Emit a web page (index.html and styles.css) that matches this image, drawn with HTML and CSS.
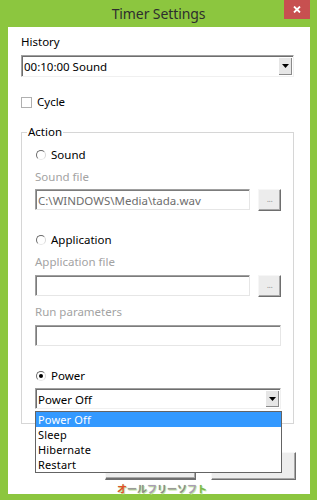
FILE: index.html
```html
<!DOCTYPE html>
<html>
<head>
<meta charset="utf-8">
<link rel="stylesheet" href="styles.css">
</head>
<body>
<div class="window">
  <div class="titlebar">
    <span></span>
    <div class="title">Timer Settings</div>
    <div class="close">
      <svg width="8" height="7" viewBox="0 0 8 7"><path d="M1 0.5 L7 6.5 M7 0.5 L1 6.5" stroke="#fff" stroke-width="1.8" fill="none"/></svg>
    </div>
  </div>
  <div class="client">
    <div class="row">History</div>
    <div class="combo history">
      <span class="combo-text">00:10:00 Sound</span>
      <span class="combo-btn"><svg width="7" height="4" viewBox="0 0 7 4"><path d="M0 0 H7 L3.5 4 Z" fill="#000"/></svg></span>
    </div>
    <div class="row cycle"><span class="checkbox"></span>Cycle</div>

    <div class="group">
      <div class="legend">Action</div>

      <div class="row radio-row first"><span class="radio"></span>Sound</div>
      <div class="row muted gap6">Sound file</div>
      <div class="file-row gap4">
        <div class="input disabled">C:\WINDOWS\Media\tada.wav</div>
        <div class="browse">...</div>
      </div>

      <div class="row radio-row gap21"><span class="radio"></span>Application</div>
      <div class="row muted gap6">Application file</div>
      <div class="file-row gap5">
        <div class="input"></div>
        <div class="browse">...</div>
      </div>
      <div class="row muted gap7">Run parameters</div>
      <div class="input wide gap5"></div>

      <div class="row radio-row gap22"><span class="radio checked"></span>Power</div>
      <div class="combo power gap4">
        <span class="combo-text">Power Off</span>
        <span class="combo-btn"><svg width="7" height="4" viewBox="0 0 7 4"><path d="M0 0 H7 L3.5 4 Z" fill="#000"/></svg></span>
        <ul class="dropdown">
          <li class="selected">Power Off</li>
          <li>Sleep</li>
          <li>Hibernate</li>
          <li>Restart</li>
        </ul>
      </div>
    </div>

    <div class="buttons">
      <div class="btn ok"></div>
      <div class="btn cancel"></div>
    </div>
    <div class="watermark"><span class="c1">オ</span><span class="c2">ー</span><span class="c3">ル</span><span class="c4">フ</span><span class="c3">リ</span><span class="c2">ー</span><span class="c3">ソ</span><span class="c4">フ</span><span class="c5">ト</span></div>
  </div>
</div>
</body>
</html>
```

FILE: styles.css
```css
html, body {
  margin: 0;
  padding: 0;
}
body {
  width: 317px;
  height: 500px;
  overflow: hidden;
  background: #8cc63f;
  font-family: "Noto Sans", "Liberation Sans", sans-serif;
  font-size: 11.5px;
  color: #000;
}
.window {
  display: flex;
  flex-direction: column;
  height: 500px;
}
.titlebar {
  height: 27px;
  display: grid;
  grid-template-columns: 1fr auto 1fr;
  align-items: start;
}
.title {
  font-size: 14px;
  letter-spacing: -0.1px;
  line-height: 27px;
  color: #2e2e2e;
  white-space: nowrap;
}
.close {
  justify-self: end;
  width: 26px;
  height: 19px;
  margin-right: 7px;
  background: #c75050;
  display: flex;
  align-items: center;
  justify-content: center;
}
.client {
  flex: 1;
  margin: 0 7px 8px 8px;
  background: #fff;
  padding: 7px 16px 0 13px;
  display: flex;
  flex-direction: column;
}
.row {
  height: 16px;
  line-height: 16px;
  display: flex;
  align-items: center;
  white-space: nowrap;
}
.muted { color: #a3a3a3; }
.gap4 { margin-top: 4px; }
.gap5 { margin-top: 5px; }
.gap6 { margin-top: 6px; }
.gap7 { margin-top: 7px; }
.gap21 { margin-top: 21px; }
.gap22 { margin-top: 22px; }

/* combo box */
.combo {
  position: relative;
  box-sizing: border-box;
  display: flex;
  border: 1px solid;
  border-color: #a0a0a0 #f0f0f0 #f0f0f0 #a0a0a0;
  box-shadow: inset 1px 1px 0 #6e6e6e;
  background: #fff;
}
.combo.history {
  margin-top: 5px;
  height: 22px;
}
.combo.power {
  height: 21px;
  width: 246px;
}
.combo-text {
  flex: 1;
  padding-left: 2px;
  padding-top: 1px;
  display: flex;
  align-items: center;
  white-space: nowrap;
}
.combo-btn {
  width: 13px;
  margin: 2px 1px 1px 0;
  box-sizing: border-box;
  background: #e6e6e6;
  border-right: 1px solid #8a8a8a;
  border-bottom: 1px solid #8a8a8a;
  display: flex;
  align-items: center;
  justify-content: center;
}

/* checkbox */
.cycle { margin-top: 17px; }
.checkbox {
  width: 11px;
  height: 11px;
  box-sizing: border-box;
  border: 1px solid #b0b0b0;
  margin-right: 5px;
  background: #fff;
}

/* group box */
.group {
  margin-top: 22px;
  border: 1px solid #d6d6d6;
  padding: 0 12px 14px 13px;
  display: flex;
  flex-direction: column;
}
.legend {
  align-self: flex-start;
  margin: -9px 0 0 -8px;
  padding: 0 1px;
  height: 16px;
  line-height: 16px;
  background: #fff;
}
.radio-row.first { margin-top: 7px; }
.radio {
  width: 10px;
  height: 10px;
  box-sizing: border-box;
  border-radius: 50%;
  border: 1px solid;
  border-color: #6a6a6a #d8d8d8 #e8e8e8 #6a6a6a;
  margin: 0 5px 0 1px;
  display: flex;
  align-items: center;
  justify-content: center;
}
.radio.checked::after {
  content: "";
  width: 4px;
  height: 4px;
  border-radius: 50%;
  background: #000;
}

/* text inputs */
.file-row {
  display: flex;
  align-items: flex-start;
}
.input {
  width: 217px;
  height: 21px;
  box-sizing: border-box;
  border: 1px solid;
  border-color: #a0a0a0 #e6e6e6 #e6e6e6 #a0a0a0;
  box-shadow: inset 1px 1px 0 #7c7c7c;
  padding: 1px 0 0 2px;
  display: flex;
  align-items: center;
  white-space: nowrap;
  color: #6d6d6d;
  background: #fff;
}
.input.wide { width: 246px; }
.browse {
  width: 23px;
  height: 22px;
  margin-left: 8px;
  box-sizing: border-box;
  background: #ececec;
  border: 1px solid;
  border-color: #f6f6f6 #6e6e6e #6e6e6e #f6f6f6;
  box-shadow: inset -1px -1px 0 #a8a8a8;
  color: #9a9a9a;
  font-size: 9px;
  line-height: 18px;
  text-align: center;
  letter-spacing: -0.5px;
}

/* dropdown list */
.dropdown {
  position: absolute;
  top: 22px;
  left: -1px;
  width: 247px;
  box-sizing: border-box;
  margin: 0;
  padding: 0;
  list-style: none;
  border: 1px solid #646464;
  background: #fff;
  z-index: 5;
}
.dropdown li {
  height: 15px;
  line-height: 15px;
  padding-left: 2px;
  font-size: 11px;
  letter-spacing: 0.15px;
  white-space: nowrap;
  overflow: hidden;
}
.dropdown li.selected {
  background: #3399ff;
  color: #fff;
}

/* bottom buttons */
.buttons {
  margin-top: 28px;
  display: flex;
  justify-content: flex-end;
  gap: 15px;
  margin-right: -2px;
}
.btn {
  height: 28px;
  box-sizing: border-box;
  background: #ededed;
  border: 1px solid;
  border-color: #f8f8f8 #6e6e6e #6e6e6e #f8f8f8;
  box-shadow: inset -1px -1px 0 #a8a8a8;
}
.btn.ok { width: 91px; border-bottom-width: 2px; }
.btn.cancel { width: 85px; }

/* site watermark */
.watermark {
  margin-top: 3px;
  height: 11px;
  padding-left: 96px;
  font-family: "Noto Sans CJK JP", sans-serif;
  font-weight: bold;
  font-size: 10px;
  line-height: 11px;
  letter-spacing: 0;
  white-space: nowrap;
  text-shadow: 0 0 1px #b5d98a, 1px 1px 0 #c8e6a6;
}
.watermark .c1 { color: #e2502c; }
.watermark .c2 { color: #9a9a9a; }
.watermark .c3 { color: #8b8b8b; }
.watermark .c4 { color: #a99bb8; }
.watermark .c5 { color: #79b84a; }
```
